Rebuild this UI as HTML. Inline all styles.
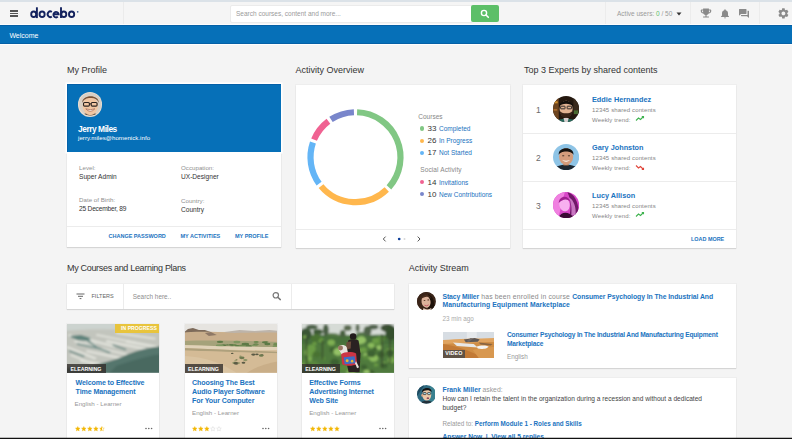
<!DOCTYPE html>
<html><head><meta charset="utf-8">
<style>
*{margin:0;padding:0;box-sizing:border-box}
html,body{width:792px;height:439px;overflow:hidden;background:#f4f4f4;font-family:"Liberation Sans",sans-serif;position:relative}
.a{position:absolute}
.t{position:absolute;white-space:nowrap;line-height:1}
.card{position:absolute;background:#fff;box-shadow:0 1px 1px rgba(0,0,0,.10),0 0 0 1px rgba(0,0,0,.025)}
.hl{position:absolute;height:1px;background:#ececec}
.ttl{position:absolute;white-space:nowrap;line-height:1;font-size:9px;color:#333}
.lnk{color:#1a73c0}
.grey{color:#858585}
</style></head><body>
<!-- top border -->
<div class="a" style="left:0;top:0;width:792px;height:2px;background:#dbe2e8"></div>
<!-- header -->
<div class="a" style="left:0;top:2px;width:792px;height:22px;background:#f5f5f5"></div>
<div class="a" style="left:0;top:23.5px;width:792px;height:1.7px;background:#fdfdfd"></div>
<!-- hamburger -->
<div class="a" style="left:9.5px;top:10.3px;width:8.8px;height:1.5px;background:#555"></div>
<div class="a" style="left:9.5px;top:12.9px;width:8.8px;height:1.5px;background:#555"></div>
<div class="a" style="left:9.5px;top:15.4px;width:8.8px;height:1.5px;background:#555"></div>
<!-- logo -->
<svg class="a" style="left:0;top:0" width="90" height="25" viewBox="0 0 90 25"><g fill="none" stroke="#13225e" stroke-width="1.9">
<ellipse cx="33.7" cy="14.25" rx="2.5" ry="2.8"/><path d="M36.9 7.3 V18.1"/>
<ellipse cx="42.1" cy="14.25" rx="2.55" ry="2.8"/>
<path d="M51.8 12 A2.6 2.8 0 1 0 51.8 16.5"/>
<path d="M53.4 14.2 H58.6 A2.6 2.8 0 1 0 57.8 16.7"/>
<path d="M61 7.3 V18.1"/><ellipse cx="63.8" cy="14.25" rx="2.5" ry="2.8"/>
<ellipse cx="71.6" cy="14.25" rx="2.6" ry="2.8"/>
</g><circle cx="77.7" cy="11.8" r="0.85" fill="#3a5a8e"/></svg>
<!-- header dividers -->
<div class="a" style="left:123px;top:2px;width:1px;height:22px;background:#ebebeb"></div>
<div class="a" style="left:605px;top:2px;width:1px;height:22px;background:#ececec"></div>
<div class="a" style="left:690px;top:2px;width:1px;height:22px;background:#ececec"></div>
<div class="a" style="left:759px;top:2px;width:1px;height:22px;background:#ececec"></div>
<!-- search -->
<div class="a" style="left:229.5px;top:5px;width:243px;height:17.5px;background:#fff;border:1px solid #ebebeb;border-radius:2px"></div>
<div class="t" style="left:236px;top:11.3px;font-size:6.5px;color:#9a9a9a">Search courses, content and more...</div>
<div class="a" style="left:471px;top:5px;width:28px;height:16.7px;background:#5cbf68;border-radius:2px"></div>
<svg class="a" style="left:479px;top:8px" width="12" height="12" viewBox="0 0 12 12"><circle cx="5" cy="5" r="2.6" fill="none" stroke="#fff" stroke-width="1.4"/><path d="M7 7 L9.3 9.3" stroke="#fff" stroke-width="1.6" stroke-linecap="round"/></svg>
<!-- active users -->
<div class="t" style="left:617px;top:10.5px;font-size:6.5px;color:#9a9a9a">Active users: <span style="color:#5cbf68">0</span> / 50</div>
<svg class="a" style="left:676px;top:11.5px" width="6" height="4" viewBox="0 0 6 4"><path d="M0.5 0.5 L5.5 0.5 L3 3.5Z" fill="#333"/></svg>
<!-- trophy -->
<svg class="a" style="left:698.5px;top:7.3px" width="14" height="12" viewBox="0 0 24 24" preserveAspectRatio="none"><path fill="#8a8a8a" d="M19 5h-2V3H7v2H5c-1.1 0-2 .9-2 2v1c0 2.550 1.92 4.63 4.39 4.94.63 1.5 1.98 2.63 3.610 2.96V19H7v2h10v-2h-4v-3.1c1.63-.33 2.98-1.46 3.61-2.96C19.08 12.63 21 10.55 21 8V7c0-1.1-.9-2-2-2zM5 8V7h2v3.82C5.84 10.4 5 9.3 5 8zm14 0c0 1.3-.84 2.4-2 2.82V7h2v1z"/></svg>
<!-- bell -->
<svg class="a" style="left:718.8px;top:7.6px" width="12" height="11.4" viewBox="0 0 24 24" preserveAspectRatio="none"><path fill="#8a8a8a" d="M12 22c1.1 0 2-.9 2-2h-4c0 1.1.89 2 2 2zm6-6v-5c0-3.070-1.64-5.64-4.5-6.32V4c0-.83-.67-1.5-1.5-1.5s-1.5.67-1.5 1.5v.68C7.63 5.36 6 7.92 6 11v5l-2 2v1h16v-1l-2-2z"/></svg>
<!-- chat -->
<svg class="a" style="left:737.6px;top:7.9px" width="12" height="11" viewBox="0 0 24 24" preserveAspectRatio="none"><path fill="#8a8a8a" d="M21 6h-2v9H6v2c0 .55.45 1 1 1h11l4 4V7c0-.55-.45-1-1-1zm-4 6V3c0-.55-.45-1-1-1H3c-.55 0-1 .45-1 1v14l4-4h10c.55 0 1-.45 1-1z"/></svg>
<!-- gear -->
<svg class="a" style="left:776.6px;top:7px" width="12.8" height="12.8" viewBox="0 0 24 24"><path fill="#8a8a8a" d="M19.14 12.94c.04-.3.06-.61.06-.94 0-.32-.02-.64-.07-.94l2.03-1.58c.18-.14.23-.41.12-.61l-1.920-3.32c-.12-.22-.37-.29-.59-.22l-2.39.96c-.5-.38-1.03-.7-1.62-.94l-.36-2.54c-.04-.24-.24-.41-.48-.41h-3.84c-.24 0-.43.17-.47.41l-.36 2.54c-.59.24-1.13.57-1.62.94l-2.39-.96c-.22-.08-.47 0-.59.22L2.74 8.87c-.12.21-.08.47.12.61l2.03 1.58c-.05.3-.09.63-.09.94s.02.64.07.94l-2.03 1.58c-.18.14-.23.41-.12.61l1.92 3.32c.12.22.37.29.59.22l2.39-.96c.5.38 1.03.7 1.62.94l.36 2.54c.05.24.24.41.48.41h3.84c.24 0 .44-.17.47-.41l.36-2.54c.59-.24 1.13-.56 1.62-.94l2.39.96c.22.08.47 0 .59-.22l1.920-3.32c.12-.22.07-.47-.12-.61l-2.01-1.58zM12 15.6c-1.98 0-3.6-1.62-3.6-3.6s1.62-3.6 3.6-3.6 3.6 1.62 3.6 3.6-1.62 3.6-3.6 3.6z"/></svg>

<!-- blue bar -->
<div class="a" style="left:0;top:25.2px;width:792px;height:18.9px;background:#0670b8;border-top:1px solid #0560a6;border-bottom:1px solid #0560a6"></div>
<div class="t" style="left:9.4px;top:31.9px;font-size:7px;color:#fff">Welcome</div>
<div class="a" style="left:0;top:44.1px;width:792px;height:1.4px;background:#fdfdfd"></div>

<!-- ===== My Profile ===== -->
<div class="ttl" style="left:67px;top:65.9px">My Profile</div>
<div class="card" style="left:67px;top:84px;width:214px;height:163px"></div>
<div class="a" style="left:67px;top:84px;width:214px;height:67.5px;background:#0670b8;box-shadow:0 0 0 1.5px #fff,inset 0 1px 0 #0560a8,inset 1px 0 0 #0562aa"></div>
<div class="a" style="left:77.6px;top:91.9px;width:24.8px;height:24.8px;border-radius:50%;background:#e9ddd0"></div><svg class="a" style="left:78.70px;top:93.00px" width="22.60" height="22.60" viewBox="0 0 100 100"><defs><clipPath id="cj"><circle cx="50" cy="50" r="50"/></clipPath></defs><g clip-path="url(#cj)"><rect width="100" height="100" fill="#d9cfc4"/>
<ellipse cx="50" cy="110" rx="45" ry="22" fill="#5a4a3a"/>
<ellipse cx="50" cy="58" rx="34" ry="40" fill="#f1c6a2"/>
<path d="M14 44 C12 6 88 2 88 44 C82 26 66 20 50 22 C34 22 20 28 14 44Z" fill="#7a5236"/>
<rect x="20" y="42" width="26" height="16" rx="5" fill="none" stroke="#2a2220" stroke-width="5"/>
<rect x="54" y="42" width="26" height="16" rx="5" fill="none" stroke="#2a2220" stroke-width="5"/>
<path d="M46 48 H54" stroke="#2a2220" stroke-width="4"/>
<path d="M30 70 Q50 92 70 70 Q50 78 30 70Z" fill="#fff" stroke="#a0604a" stroke-width="3"/></g></svg>
<div class="t" style="left:78px;top:124.7px;font-size:8.4px;font-weight:bold;color:#fff;letter-spacing:-.45px">Jerry Miles</div>
<div class="t" style="left:78px;top:135px;font-size:6.1px;color:#fff;letter-spacing:.04px">jerry.miles@homenick.info</div>
<div class="t grey" style="left:79px;top:164.9px;font-size:6.2px;color:#909090">Level:</div>
<div class="t" style="left:79px;top:173.7px;font-size:6.6px;color:#333">Super Admin</div>
<div class="t grey" style="left:181px;top:164.9px;font-size:6.2px;color:#909090">Occupation:</div>
<div class="t" style="left:181px;top:173.7px;font-size:6.6px;color:#333">UX-Designer</div>
<div class="t grey" style="left:79px;top:196.9px;font-size:6.2px;color:#909090">Date of Birth:</div>
<div class="t" style="left:79px;top:205.7px;font-size:6.6px;color:#333;letter-spacing:-.2px">25 December, 89</div>
<div class="t grey" style="left:181px;top:197.9px;font-size:6.2px;color:#909090">Country:</div>
<div class="t" style="left:181px;top:206.7px;font-size:6.6px;color:#333">Country</div>
<div class="hl" style="left:67px;top:226px;width:214px"></div>
<div class="t lnk" style="left:108.5px;top:233.7px;font-size:5.5px;font-weight:bold">CHANGE PASSWORD</div>
<div class="t lnk" style="left:180.5px;top:233.7px;font-size:5.5px;font-weight:bold">MY ACTIVITIES</div>
<div class="t lnk" style="left:235px;top:233.7px;font-size:5.5px;font-weight:bold">MY PROFILE</div>

<!-- ===== Activity Overview ===== -->
<div class="ttl" style="left:295.5px;top:65.9px">Activity Overview</div>
<div class="card" style="left:295.5px;top:84.5px;width:214px;height:163.5px"></div>
<svg class="a" style="left:295.5px;top:84.5px" width="214" height="144" viewBox="295.5 84.5 214 144">
<g fill="none" stroke-width="6.2">
<path d="M356.57 111.73 A45 45 0 0 1 388.44 186.81" stroke="#81c784"/>
<path d="M386.26 189.07 A45 45 0 0 1 320.53 185.63" stroke="#ffb74d"/>
<path d="M318.59 183.15 A45 45 0 0 1 312.45 142.05" stroke="#64b5f6"/>
<path d="M313.58 139.12 A45 45 0 0 1 327.92 120.76" stroke="#f06292"/>
<path d="M330.49 118.96 A45 45 0 0 1 353.43 111.73" stroke="#7986cb"/>
</g>
</svg>
<div class="hl" style="left:295.5px;top:228.5px;width:214px"></div>
<svg class="a" style="left:380px;top:234px" width="46" height="10" viewBox="0 0 46 10"><path d="M5.6 2.6 L3.3 5 L5.6 7.4" fill="none" stroke="#555" stroke-width="1"/><circle cx="19.2" cy="5" r="1.35" fill="#0d3f9a"/><circle cx="24.5" cy="5" r="1" fill="#d8d8d8"/><path d="M37.7 2.6 L40 5 L37.7 7.4" fill="none" stroke="#555" stroke-width="1"/></svg>
<div class="t grey" style="left:418.3px;top:113.8px;font-size:6.5px;color:#888">Courses</div>
<div class="t grey" style="left:420.2px;top:167.2px;font-size:6.5px;letter-spacing:.12px;color:#888">Social Activity</div>
<div class="a" style="left:420px;top:126.4px;width:4.2px;height:4.2px;border-radius:50%;background:#81c784"></div>
<div class="t" style="left:427.5px;top:124.9px;font-size:8px;color:#333">33</div>
<div class="t lnk" style="left:439px;top:125.8px;font-size:6.5px">Completed</div>
<div class="a" style="left:420px;top:138.7px;width:4.2px;height:4.2px;border-radius:50%;background:#ffb74d"></div>
<div class="t" style="left:427.5px;top:137.2px;font-size:8px;color:#333">26</div>
<div class="t lnk" style="left:439px;top:138.1px;font-size:6.5px">In Progress</div>
<div class="a" style="left:420px;top:150.7px;width:4.2px;height:4.2px;border-radius:50%;background:#64b5f6"></div>
<div class="t" style="left:427.5px;top:149.2px;font-size:8px;color:#333">17</div>
<div class="t lnk" style="left:439px;top:150.1px;font-size:6.5px">Not Started</div>
<div class="a" style="left:420px;top:180.3px;width:4.2px;height:4.2px;border-radius:50%;background:#f06292"></div>
<div class="t" style="left:427.5px;top:178.8px;font-size:8px;color:#333">14</div>
<div class="t lnk" style="left:439px;top:179.7px;font-size:6.5px">Invitations</div>
<div class="a" style="left:420px;top:192.2px;width:4.2px;height:4.2px;border-radius:50%;background:#7986cb"></div>
<div class="t" style="left:427.5px;top:190.7px;font-size:8px;color:#333">10</div>
<div class="t lnk" style="left:439px;top:191.6px;font-size:6.5px">New Contributions</div>

<!-- ===== Top 3 Experts ===== -->
<div class="ttl" style="left:524px;top:65.9px">Top 3 Experts by shared contents</div>
<div class="card" style="left:523.2px;top:84.5px;width:213px;height:163.5px"></div>
<div class="hl" style="left:523.2px;top:133px;width:213px"></div>
<div class="hl" style="left:523.2px;top:181px;width:213px"></div>
<div class="hl" style="left:523.2px;top:228.5px;width:213px"></div>
<div class="t lnk" style="left:691px;top:236.6px;font-size:5.45px;font-weight:bold">LOAD MORE</div>
<div class="t" style="left:536px;top:105.9px;font-size:8.5px;color:#6a6a6a">1</div>
<svg class="a" style="left:553.30px;top:95.90px" width="26.20" height="26.20" viewBox="0 0 100 100"><defs><clipPath id="ce"><circle cx="50" cy="50" r="50"/></clipPath></defs><g clip-path="url(#ce)"><rect width="100" height="100" fill="#24180f"/>
<rect x="0" y="0" width="22" height="100" fill="#6e4520"/><rect x="0" y="20" width="18" height="8" fill="#d0902e"/><rect x="2" y="50" width="14" height="6" fill="#b07030"/>
<rect x="78" y="0" width="22" height="70" fill="#3a2a1c"/><rect x="80" y="55" width="16" height="14" fill="#4a6a30"/>
<ellipse cx="50" cy="50" rx="25" ry="32" fill="#e2b392"/>
<path d="M24 40 C22 12 78 12 76 40 C68 26 32 26 24 40Z" fill="#15100c"/>
<path d="M25 55 C28 92 72 92 75 55 C68 70 32 70 25 55Z" fill="#3a2418"/>
<rect x="29" y="39" width="17" height="10" rx="2" fill="none" stroke="#222" stroke-width="3.5"/><rect x="54" y="39" width="17" height="10" rx="2" fill="none" stroke="#222" stroke-width="3.5"/>
<path d="M8 100 C20 82 80 82 92 100Z" fill="#2a6a5e"/><path d="M40 84 L60 84 L56 100 H44Z" fill="#d8d0d0"/></g></svg>
<div class="t lnk" style="left:592px;top:95.6px;font-size:7.3px;font-weight:bold">Eddie Hernandez</div>
<div class="t grey" style="left:592px;top:106.7px;font-size:6px;letter-spacing:.13px">12345 shared contents</div>
<div class="t grey" style="left:592px;top:116.7px;font-size:6px;letter-spacing:.15px">Weekly trend:</div>
<svg class="a" style="left:634.8px;top:115.3px" width="10" height="7" viewBox="0 0 10 7"><path d="M1 5.5 L3.5 3 L5.5 4.5 L8.5 1.5 M6.8 1.5 H8.5 V3.2" fill="none" stroke="#3fb34f" stroke-width="1.1"/></svg>
<div class="t" style="left:536px;top:154.3px;font-size:8.5px;color:#6a6a6a">2</div>
<svg class="a" style="left:553.30px;top:144.30px" width="26.20" height="26.20" viewBox="0 0 100 100"><defs><clipPath id="cg"><circle cx="50" cy="50" r="50"/></clipPath></defs><g clip-path="url(#cg)"><rect width="100" height="100" fill="#8ec4e6"/>
<path d="M2 100 C10 72 90 72 98 100Z" fill="#1c2630"/>
<rect x="40" y="70" width="20" height="12" fill="#b07858"/>
<ellipse cx="50" cy="48" rx="27" ry="32" fill="#d49c7c"/>
<path d="M22 42 C18 8 82 8 78 42 C74 24 26 24 22 42Z" fill="#15110e"/>
<path d="M34 60 Q50 76 66 60 Q50 68 34 60Z" fill="#fff"/>
<ellipse cx="39" cy="45" rx="4.5" ry="2.2" fill="#3a2a20"/><ellipse cx="61" cy="45" rx="4.5" ry="2.2" fill="#3a2a20"/></g></svg>
<div class="t lnk" style="left:592px;top:144.0px;font-size:7.3px;font-weight:bold">Gary Johnston</div>
<div class="t grey" style="left:592px;top:155.1px;font-size:6px;letter-spacing:.13px">12345 shared contents</div>
<div class="t grey" style="left:592px;top:165.1px;font-size:6px;letter-spacing:.15px">Weekly trend:</div>
<svg class="a" style="left:634.8px;top:163.7px" width="10" height="7" viewBox="0 0 10 7"><path d="M1 1.5 L3.5 4 L5.5 2.5 L8.5 5.5 M6.8 5.5 H8.5 V3.8" fill="none" stroke="#e0453a" stroke-width="1.1"/></svg>
<div class="t" style="left:536px;top:201.6px;font-size:8.5px;color:#6a6a6a">3</div>
<svg class="a" style="left:553.30px;top:191.60px" width="26.20" height="26.20" viewBox="0 0 100 100"><defs><clipPath id="cl"><circle cx="50" cy="50" r="50"/></clipPath></defs><g clip-path="url(#cl)"><rect width="100" height="100" fill="#d848c8"/>
<path d="M0 0 H45 L20 100 H0Z" fill="#f080e0"/>
<path d="M55 0 C85 10 100 40 100 100 H60 C70 70 70 30 55 0Z" fill="#701868"/>
<path d="M60 20 C80 30 90 60 86 90 L70 90 C72 60 70 40 60 20Z" fill="#f0a0e8" opacity=".7"/>
<ellipse cx="44" cy="48" rx="20" ry="26" fill="#f8b0f0" transform="rotate(-10 44 48)"/>
<path d="M22 42 C22 14 58 8 66 36 C54 24 36 26 22 42Z" fill="#a02090"/>
<path d="M20 100 C30 75 60 70 80 100Z" fill="#3a0a34"/></g></svg>
<div class="t lnk" style="left:592px;top:191.7px;font-size:7.3px;font-weight:bold">Lucy Allison</div>
<div class="t grey" style="left:592px;top:202.8px;font-size:6px;letter-spacing:.13px">12345 shared contents</div>
<div class="t grey" style="left:592px;top:212.8px;font-size:6px;letter-spacing:.15px">Weekly trend:</div>
<svg class="a" style="left:634.8px;top:211.4px" width="10" height="7" viewBox="0 0 10 7"><path d="M1 5.5 L3.5 3 L5.5 4.5 L8.5 1.5 M6.8 1.5 H8.5 V3.2" fill="none" stroke="#3fb34f" stroke-width="1.1"/></svg>


<!-- ===== My Courses ===== -->
<div class="ttl" style="left:67px;top:264.4px;letter-spacing:-.32px">My Courses and Learning Plans</div>
<div class="card" style="left:67px;top:283.8px;width:327px;height:25px"></div>
<div class="a" style="left:122.5px;top:283.8px;width:1px;height:25px;background:#ececec"></div>
<div class="a" style="left:290.5px;top:283.8px;width:1px;height:25px;background:#ececec"></div>
<svg class="a" style="left:76px;top:293px" width="9" height="7" viewBox="0 0 9 7"><path d="M0.5 1 H8.5 M2 3.3 H7 M3.6 5.6 H5.4" stroke="#666" stroke-width="1"/></svg>
<div class="t" style="left:91.5px;top:293.5px;font-size:5.5px;color:#666">FILTERS</div>
<div class="t" style="left:132.8px;top:294.4px;font-size:6.4px;color:#8e8e8e">Search here..</div>
<svg class="a" style="left:271px;top:291px" width="11" height="11" viewBox="0 0 11 11"><circle cx="4.8" cy="4.3" r="2.7" fill="none" stroke="#777" stroke-width="1.2"/><path d="M6.8 6.3 L9.3 8.6" stroke="#777" stroke-width="1.5" stroke-linecap="round"/></svg>

<div class="card" style="left:67px;top:324px;width:92.3px;height:120px"></div>
<svg class="a" style="left:67px;top:323.8px" width="92.3" height="48.8" viewBox="0 0 93 49" preserveAspectRatio="none"><defs><filter id="bl1" x="-10%" y="-10%" width="120%" height="120%"><feGaussianBlur stdDeviation="0.9"/></filter><clipPath id="cl1"><rect width="93" height="49"/></clipPath></defs><g clip-path="url(#cl1)"><rect width="93" height="49" fill="#aeb8b2"/><g filter="url(#bl1)"><rect x="-3" y="-3" width="99" height="55" fill="#aeb8b2"/><rect x="-3" y="-3" width="99" height="10" fill="#ccd3cf"/><path d="M-3 7 C25 4 60 5 96 8 V27 C82 28 72 27 62 31 C50 37 35 41 16 43 L-3 45Z" fill="#c2c5bd"/><path d="M2 10 L30 20 L28 21.43796462709189 L1 11.725557552510269Z" fill="#e2e3dc"/><path d="M8 16 L40 26 L38 27.744229225295953 L7 18.09307507035514Z" fill="#e2e3dc"/><path d="M0 22 L30 34 L28 35.56995516654808 L-1 23.883946199857697Z" fill="#e2e3dc"/><path d="M12 12 L50 22 L48 23.803920038596196 L11 14.164704046315434Z" fill="#e2e3dc"/><path d="M20 26 L58 34 L56 35.82572030410805 L19 28.190864364929666Z" fill="#e2e3dc"/><path d="M4 30 L28 40 L26 41.265528859239815 L3 31.518634631087775Z" fill="#e2e3dc"/><path d="M30 10 L70 18 L68 19.213167991554876 L29 11.45580158986585Z" fill="#e2e3dc"/><path d="M40 16 L80 24 L78 26.03746908209646 L39 18.44496289851575Z" fill="#e2e3dc"/><path d="M50 8 L90 14 L88 15.459354014328008 L49 9.75122481719361Z" fill="#e2e3dc"/><path d="M36 24 L62 30 L60 31.434330961046697 L35 25.721197153256036Z" fill="#e2e3dc"/><path d="M60 16 L92 22 L90 24.195644835510464 L59 18.634773802612557Z" fill="#e2e3dc"/><path d="M14 36 L40 40 L38 41.67026350752245 L13 38.00431620902694Z" fill="#e2e3dc"/><path d="M4 12 L24 16 L23 17.5 L4 13.8Z" fill="#6d8c86"/><path d="M10 19 L34 24 L33 25.5 L10 20.8Z" fill="#6d8c86"/><path d="M18 14 L30 22 L29 23.5 L18 15.8Z" fill="#6d8c86"/><path d="M2 26 L18 32 L17 33.5 L2 27.8Z" fill="#6d8c86"/><path d="M28 22 L44 28 L43 29.5 L28 23.8Z" fill="#6d8c86"/><path d="M46 20 L60 25 L59 26.5 L46 21.8Z" fill="#6d8c86"/><path d="M3 12 L14 11 L24 14 L20 17 L10 16Z" fill="#5f837c"/><path d="M10 46 C30 41 48 37 60 31 C72 26 84 23 96 22 V52 H-3 V47Z" fill="#55766d"/><path d="M50 42 C68 36 82 32 96 30 V52 H40Z" fill="#486960"/><path d="M-3 44 L14 44 L20 52 H-3Z" fill="#5a7068"/></g></g></svg>
<div class="a" style="left:115px;top:324px;width:44.3px;height:8.5px;background:#e8c43c"></div>
<div class="t" style="left:121px;top:326.1px;font-size:5.1px;font-weight:bold;color:#fff;letter-spacing:.05px">IN PROGRESS</div>
<div class="a" style="left:67px;top:364.4px;width:38.8px;height:8.2px;background:rgba(50,46,44,.8)"></div>
<div class="t" style="left:70.5px;top:366.5px;font-size:5.3px;font-weight:bold;color:#fff;letter-spacing:-.05px">ELEARNING</div>
<div class="a lnk" style="left:75.6px;top:378.8px;font-size:7.1px;letter-spacing:-.12px;font-weight:bold;line-height:9.1px;white-space:nowrap">Welcome to Effective<br>Time Management</div>
<div class="t" style="left:74.5px;top:401.2px;font-size:6.2px;color:#999">English - Learner</div>
<svg class="a" style="left:74.8px;top:425.8px" width="34" height="7" viewBox="0 0 34 7"><defs><linearGradient id="half"><stop offset="50%" stop-color="#f2b705"/><stop offset="50%" stop-color="#fff"/></linearGradient></defs><path transform="translate(0.30 0.3) scale(.82)" d="M3 0.3 L3.8 2.1 L5.8 2.3 L4.3 3.6 L4.7 5.6 L3 4.6 L1.3 5.6 L1.7 3.6 L0.2 2.3 L2.2 2.1Z" fill="#f2b705" stroke="#f2b705" stroke-width="0.5"/><path transform="translate(6.35 0.3) scale(.82)" d="M3 0.3 L3.8 2.1 L5.8 2.3 L4.3 3.6 L4.7 5.6 L3 4.6 L1.3 5.6 L1.7 3.6 L0.2 2.3 L2.2 2.1Z" fill="#f2b705" stroke="#f2b705" stroke-width="0.5"/><path transform="translate(12.40 0.3) scale(.82)" d="M3 0.3 L3.8 2.1 L5.8 2.3 L4.3 3.6 L4.7 5.6 L3 4.6 L1.3 5.6 L1.7 3.6 L0.2 2.3 L2.2 2.1Z" fill="#f2b705" stroke="#f2b705" stroke-width="0.5"/><path transform="translate(18.45 0.3) scale(.82)" d="M3 0.3 L3.8 2.1 L5.8 2.3 L4.3 3.6 L4.7 5.6 L3 4.6 L1.3 5.6 L1.7 3.6 L0.2 2.3 L2.2 2.1Z" fill="#f2b705" stroke="#f2b705" stroke-width="0.5"/><path transform="translate(24.50 0.3) scale(.82)" d="M3 0.3 L3.8 2.1 L5.8 2.3 L4.3 3.6 L4.7 5.6 L3 4.6 L1.3 5.6 L1.7 3.6 L0.2 2.3 L2.2 2.1Z" fill="url(#half)" stroke="#f2b705" stroke-width="0.5"/></svg>
<svg class="a" style="left:144.7px;top:427.3px" width="8" height="3" viewBox="0 0 8 3"><circle cx="1" cy="1.5" r="0.8" fill="#666"/><circle cx="3.8" cy="1.5" r="0.8" fill="#666"/><circle cx="6.6" cy="1.5" r="0.8" fill="#666"/></svg>
<div class="card" style="left:184.5px;top:324px;width:92.3px;height:120px"></div>
<svg class="a" style="left:184.5px;top:323.8px" width="92.3" height="48.8" viewBox="0 0 93 49" preserveAspectRatio="none"><defs><filter id="bl2" x="-10%" y="-10%" width="120%" height="120%"><feGaussianBlur stdDeviation="0.7"/></filter><clipPath id="cbl2"><rect width="93" height="49"/></clipPath></defs><g clip-path="url(#cbl2)"><rect width="93" height="49" fill="#d3bb97"/><g filter="url(#bl2)"><rect x="-3" y="-3" width="99" height="55" fill="#d3bb97"/><rect x="-3" y="-3" width="99" height="11" fill="#e6e4e0"/><path d="M40 8 L55 6 L70 7 L85 6 L96 7 V10 H40Z" fill="#bdb4aa"/><path d="M-3 10 L3 5 L8 4 L14 6 L20 6 L26 8 L30 10Z" fill="#7d6a5a"/><path d="M-3 9 C10 7 30 8 50 9 C70 9 85 8 96 9 V18 H-3Z" fill="#c9ae8c"/><path d="M20 9 L26 8 L32 11 L24 12Z" fill="#8e7866"/><path d="M-3 17 C30 16 60 17 96 18 V23 C60 24 30 22 -3 21Z" fill="#a5a27a"/><ellipse cx="60.8" cy="20.3" rx="3.8" ry="1.4" fill="#5d7a46"/><ellipse cx="60.8" cy="21.8" rx="2.1" ry="0.8" fill="#7e9660"/><ellipse cx="62.1" cy="20.6" rx="2.0" ry="0.8" fill="#5d7a46"/><ellipse cx="52.3" cy="18.0" rx="3.5" ry="1.3" fill="#7e9660"/><ellipse cx="71.2" cy="20.5" rx="2.6" ry="1.0" fill="#5d7a46"/><ellipse cx="72.3" cy="20.6" rx="2.0" ry="0.7" fill="#6f8a52"/><ellipse cx="82.4" cy="17.8" rx="1.7" ry="0.6" fill="#6f8a52"/><ellipse cx="69.2" cy="21.4" rx="2.4" ry="0.9" fill="#7e9660"/><ellipse cx="83.0" cy="20.1" rx="3.1" ry="1.2" fill="#5d7a46"/><ellipse cx="35.3" cy="17.9" rx="3.2" ry="1.2" fill="#5d7a46"/><ellipse cx="91.9" cy="22.5" rx="3.6" ry="1.4" fill="#7e9660"/><ellipse cx="49.5" cy="21.3" rx="2.8" ry="1.1" fill="#6f8a52"/><ellipse cx="39.0" cy="21.3" rx="2.6" ry="1.0" fill="#5d7a46"/><ellipse cx="57.0" cy="22.3" rx="3.6" ry="1.4" fill="#6f8a52"/><ellipse cx="47.2" cy="22.1" rx="1.7" ry="0.6" fill="#5d7a46"/><ellipse cx="90.9" cy="19.5" rx="1.8" ry="0.7" fill="#7e9660"/><ellipse cx="46.3" cy="20.9" rx="2.4" ry="0.9" fill="#5d7a46"/><ellipse cx="54.0" cy="22.3" rx="3.4" ry="1.3" fill="#6f8a52"/><ellipse cx="42.7" cy="21.0" rx="1.6" ry="0.6" fill="#5d7a46"/><ellipse cx="80.4" cy="18.4" rx="2.9" ry="1.1" fill="#5d7a46"/><ellipse cx="64.0" cy="22.4" rx="3.4" ry="1.3" fill="#5d7a46"/><ellipse cx="71.7" cy="18.1" rx="2.6" ry="1.0" fill="#6f8a52"/><ellipse cx="35.0" cy="21.8" rx="3.9" ry="1.5" fill="#7e9660"/><ellipse cx="52.3" cy="21.9" rx="2.1" ry="0.8" fill="#5d7a46"/><ellipse cx="91.8" cy="20.5" rx="3.0" ry="1.1" fill="#6f8a52"/><path d="M-3 21 C30 22 60 23 96 23 V26 C60 27 30 25 -3 24Z" fill="#e0d2b8"/><path d="M-3 24 C30 25 60 27 96 28 V30 C60 29 30 27 -3 26.5Z" fill="#aea07c"/><path d="M-3 26.5 L96 29.5 V52 H-3Z" fill="#d4bb96"/><path d="M-3 32 C20 33 40 40 56 52 H-3Z" fill="#dac4a2"/><path d="M58 52 C68 44 82 39 96 37 V52Z" fill="#c9ae88"/><ellipse cx="77.6" cy="31.3" rx="1.6" ry="0.8" fill="#5a5a44"/><ellipse cx="55.9" cy="32.3" rx="1.2" ry="0.6" fill="#8e9466"/><ellipse cx="51.9" cy="36.0" rx="1.1" ry="0.6" fill="#6e7a50"/><ellipse cx="57.3" cy="34.0" rx="2.7" ry="1.4" fill="#6e7a50"/><ellipse cx="72.5" cy="30.5" rx="1.8" ry="0.9" fill="#5a5a44"/><ellipse cx="50.1" cy="39.0" rx="2.5" ry="1.2" fill="#8e9466"/><ellipse cx="68.9" cy="30.7" rx="2.2" ry="1.1" fill="#5a5a44"/><ellipse cx="51.5" cy="39.5" rx="2.6" ry="1.3" fill="#5a5a44"/><ellipse cx="47.6" cy="29.5" rx="1.3" ry="0.7" fill="#5a5a44"/><ellipse cx="76.8" cy="31.6" rx="2.3" ry="1.2" fill="#6e7a50"/><ellipse cx="58.9" cy="39.0" rx="1.9" ry="1.0" fill="#5a5a44"/><ellipse cx="50.8" cy="36.9" rx="1.2" ry="0.6" fill="#8e9466"/><ellipse cx="60.8" cy="36.2" rx="2.2" ry="1.1" fill="#8e9466"/><ellipse cx="54.2" cy="39.1" rx="1.5" ry="0.7" fill="#8e9466"/></g></g></svg>
<div class="a" style="left:184.5px;top:364.4px;width:38.8px;height:8.2px;background:rgba(50,46,44,.8)"></div>
<div class="t" style="left:188.0px;top:366.5px;font-size:5.3px;font-weight:bold;color:#fff;letter-spacing:-.05px">ELEARNING</div>
<div class="a lnk" style="left:192.0px;top:378.8px;font-size:7.1px;letter-spacing:-.12px;font-weight:bold;line-height:9.1px;white-space:nowrap">Choosing The Best<br>Audio Player Software<br>For Your Computer</div>
<div class="t" style="left:192.0px;top:410.2px;font-size:6.2px;color:#999">English - Learner</div>
<svg class="a" style="left:192.3px;top:425.8px" width="34" height="7" viewBox="0 0 34 7"><defs><linearGradient id="half"><stop offset="50%" stop-color="#f2b705"/><stop offset="50%" stop-color="#fff"/></linearGradient></defs><path transform="translate(0.30 0.3) scale(.82)" d="M3 0.3 L3.8 2.1 L5.8 2.3 L4.3 3.6 L4.7 5.6 L3 4.6 L1.3 5.6 L1.7 3.6 L0.2 2.3 L2.2 2.1Z" fill="#f2b705" stroke="#f2b705" stroke-width="0.5"/><path transform="translate(6.35 0.3) scale(.82)" d="M3 0.3 L3.8 2.1 L5.8 2.3 L4.3 3.6 L4.7 5.6 L3 4.6 L1.3 5.6 L1.7 3.6 L0.2 2.3 L2.2 2.1Z" fill="#f2b705" stroke="#f2b705" stroke-width="0.5"/><path transform="translate(12.40 0.3) scale(.82)" d="M3 0.3 L3.8 2.1 L5.8 2.3 L4.3 3.6 L4.7 5.6 L3 4.6 L1.3 5.6 L1.7 3.6 L0.2 2.3 L2.2 2.1Z" fill="#f2b705" stroke="#f2b705" stroke-width="0.5"/><path transform="translate(18.45 0.3) scale(.82)" d="M3 0.3 L3.8 2.1 L5.8 2.3 L4.3 3.6 L4.7 5.6 L3 4.6 L1.3 5.6 L1.7 3.6 L0.2 2.3 L2.2 2.1Z" fill="none" stroke="#cfcfcf" stroke-width="0.5"/><path transform="translate(24.50 0.3) scale(.82)" d="M3 0.3 L3.8 2.1 L5.8 2.3 L4.3 3.6 L4.7 5.6 L3 4.6 L1.3 5.6 L1.7 3.6 L0.2 2.3 L2.2 2.1Z" fill="none" stroke="#cfcfcf" stroke-width="0.5"/></svg>
<svg class="a" style="left:262.2px;top:427.3px" width="8" height="3" viewBox="0 0 8 3"><circle cx="1" cy="1.5" r="0.8" fill="#666"/><circle cx="3.8" cy="1.5" r="0.8" fill="#666"/><circle cx="6.6" cy="1.5" r="0.8" fill="#666"/></svg>
<div class="card" style="left:301.7px;top:324px;width:92.3px;height:120px"></div>
<svg class="a" style="left:301.7px;top:323.8px" width="92.3" height="48.8" viewBox="0 0 93 49" preserveAspectRatio="none"><defs><filter id="bl3" x="-10%" y="-10%" width="120%" height="120%"><feGaussianBlur stdDeviation="1.1"/></filter><filter id="bl3b"><feGaussianBlur stdDeviation="0.35"/></filter><clipPath id="cbl3"><rect width="93" height="49"/></clipPath></defs><g clip-path="url(#cbl3)"><rect width="93" height="49" fill="#4f7a3c"/><g filter="url(#bl3)"><rect x="-3" y="-3" width="99" height="55" fill="#4f7a3c"/><rect x="-3" y="-3" width="99" height="14" fill="#d6dbd6"/><ellipse cx="10" cy="3" rx="6" ry="2.5" fill="#4a5e44"/><ellipse cx="16" cy="8" rx="5" ry="3" fill="#3e5a36"/><ellipse cx="46" cy="4" rx="4" ry="3" fill="#5a6a50"/><ellipse cx="41" cy="10" rx="3" ry="4" fill="#4a6040"/><ellipse cx="72" cy="3" rx="5" ry="2.5" fill="#4e5e48"/><ellipse cx="86" cy="4" rx="7" ry="4" fill="#3c5034"/><ellipse cx="30" cy="12" rx="8" ry="3" fill="#5a7a4a"/><ellipse cx="60" cy="11" rx="6" ry="3" fill="#56764a"/><path d="M-3 14 C10 10 25 11 40 13 C55 12 70 10 96 11 V20 H-3Z" fill="#46703a"/><ellipse cx="4" cy="10" rx="6" ry="6" fill="#3a5634"/><ellipse cx="24" cy="6" rx="3" ry="6" fill="#4a5e44"/><ellipse cx="66" cy="7" rx="4" ry="5" fill="#506448"/><ellipse cx="90" cy="9" rx="6" ry="7" fill="#34502e"/><ellipse cx="56" cy="4" rx="2" ry="4" fill="#5a6a52"/><ellipse cx="29.4" cy="18.6" rx="3.8" ry="3.0" fill="#7fb052"/><ellipse cx="77.7" cy="16.5" rx="3.5" ry="2.8" fill="#4a7232"/><ellipse cx="18.8" cy="16.2" rx="3.0" ry="2.4" fill="#6a9c44"/><ellipse cx="6.8" cy="28.7" rx="4.4" ry="3.5" fill="#7fb052"/><ellipse cx="89.9" cy="36.3" rx="3.5" ry="2.8" fill="#7fb052"/><ellipse cx="54.0" cy="27.7" rx="4.9" ry="3.9" fill="#7fb052"/><ellipse cx="52.0" cy="17.9" rx="3.0" ry="2.4" fill="#4a7232"/><ellipse cx="9.4" cy="24.4" rx="4.4" ry="3.5" fill="#6a9c44"/><ellipse cx="8.0" cy="34.1" rx="2.2" ry="1.7" fill="#7fb052"/><ellipse cx="51.1" cy="15.3" rx="1.7" ry="1.4" fill="#6a9c44"/><ellipse cx="46.2" cy="32.7" rx="4.2" ry="3.4" fill="#5a8a3c"/><ellipse cx="54.8" cy="29.8" rx="2.5" ry="2.0" fill="#3e6230"/><ellipse cx="15.4" cy="41.9" rx="1.8" ry="1.4" fill="#8abb5c"/><ellipse cx="82.9" cy="40.0" rx="2.5" ry="2.0" fill="#7fb052"/><ellipse cx="9.5" cy="28.5" rx="4.1" ry="3.3" fill="#6a9c44"/><ellipse cx="88.5" cy="28.6" rx="4.9" ry="3.9" fill="#7fb052"/><ellipse cx="72.2" cy="34.2" rx="4.6" ry="3.7" fill="#8abb5c"/><ellipse cx="31.0" cy="26.0" rx="3.2" ry="2.6" fill="#3e6230"/><ellipse cx="42.3" cy="44.1" rx="4.8" ry="3.8" fill="#5a8a3c"/><ellipse cx="4.3" cy="40.1" rx="2.6" ry="2.1" fill="#4a7232"/><ellipse cx="77.7" cy="23.5" rx="2.9" ry="2.3" fill="#94c266"/><ellipse cx="31.7" cy="47.8" rx="2.7" ry="2.2" fill="#3a5a2c"/><ellipse cx="3.7" cy="41.4" rx="2.0" ry="1.6" fill="#3a5a2c"/><ellipse cx="86.9" cy="31.4" rx="2.1" ry="1.7" fill="#5a8a3c"/><ellipse cx="51.3" cy="45.7" rx="4.4" ry="3.5" fill="#3e6230"/><ellipse cx="66.5" cy="49.5" rx="3.9" ry="3.1" fill="#5a8a3c"/><ellipse cx="12.6" cy="19.5" rx="2.3" ry="1.8" fill="#6a9c44"/><ellipse cx="-0.8" cy="43.8" rx="2.1" ry="1.7" fill="#3a5a2c"/><ellipse cx="38.6" cy="26.7" rx="3.5" ry="2.8" fill="#6a9c44"/><ellipse cx="65.0" cy="32.1" rx="3.7" ry="2.9" fill="#94c266"/><ellipse cx="69.8" cy="29.9" rx="4.5" ry="3.6" fill="#3e6230"/><ellipse cx="64.0" cy="33.7" rx="2.9" ry="2.3" fill="#5a8a3c"/><ellipse cx="8.0" cy="36.5" rx="1.7" ry="1.4" fill="#7fb052"/><ellipse cx="93.5" cy="29.3" rx="1.9" ry="1.5" fill="#4a7232"/><ellipse cx="3.1" cy="13.0" rx="2.0" ry="1.6" fill="#7fb052"/><ellipse cx="90.0" cy="35.7" rx="1.7" ry="1.4" fill="#6a9c44"/><ellipse cx="57.6" cy="18.5" rx="2.4" ry="1.9" fill="#8abb5c"/><ellipse cx="56.4" cy="30.5" rx="1.9" ry="1.5" fill="#5a8a3c"/><ellipse cx="94.3" cy="30.2" rx="3.2" ry="2.6" fill="#7fb052"/><ellipse cx="12.0" cy="40.7" rx="4.1" ry="3.3" fill="#5a8a3c"/><ellipse cx="13.7" cy="13.9" rx="4.8" ry="3.9" fill="#4a7232"/><ellipse cx="33.1" cy="38.5" rx="4.7" ry="3.8" fill="#3e6230"/><ellipse cx="49.2" cy="49.2" rx="4.5" ry="3.6" fill="#94c266"/><ellipse cx="48.3" cy="46.6" rx="2.7" ry="2.2" fill="#6a9c44"/><ellipse cx="73.6" cy="25.2" rx="2.3" ry="1.8" fill="#3e6230"/><ellipse cx="74.5" cy="41.1" rx="2.2" ry="1.7" fill="#6a9c44"/><ellipse cx="69.8" cy="21.4" rx="3.3" ry="2.6" fill="#8abb5c"/><ellipse cx="68.9" cy="49.6" rx="4.3" ry="3.4" fill="#3a5a2c"/><ellipse cx="65.2" cy="48.4" rx="3.1" ry="2.5" fill="#94c266"/><ellipse cx="90.6" cy="26.5" rx="2.3" ry="1.8" fill="#6a9c44"/><ellipse cx="43.6" cy="25.5" rx="3.2" ry="2.6" fill="#4a7232"/><ellipse cx="79.5" cy="30.7" rx="3.8" ry="3.0" fill="#3e6230"/><ellipse cx="60.4" cy="43.9" rx="1.9" ry="1.5" fill="#5a8a3c"/><ellipse cx="70.8" cy="30.7" rx="2.1" ry="1.7" fill="#3e6230"/><ellipse cx="59.7" cy="16.2" rx="4.8" ry="3.8" fill="#94c266"/><ellipse cx="36.4" cy="27.9" rx="4.8" ry="3.9" fill="#94c266"/><ellipse cx="13.4" cy="49.7" rx="1.6" ry="1.3" fill="#4a7232"/><ellipse cx="76.2" cy="18.4" rx="4.4" ry="3.5" fill="#5a8a3c"/><ellipse cx="61.8" cy="26.0" rx="3.4" ry="2.7" fill="#6a9c44"/><ellipse cx="0.1" cy="42.6" rx="4.0" ry="3.2" fill="#7fb052"/><ellipse cx="88.6" cy="29.1" rx="4.6" ry="3.6" fill="#3e6230"/><ellipse cx="82.8" cy="14.0" rx="2.2" ry="1.8" fill="#4a7232"/><ellipse cx="21.3" cy="34.7" rx="2.4" ry="1.9" fill="#5a8a3c"/><ellipse cx="78.9" cy="15.3" rx="4.1" ry="3.3" fill="#5a8a3c"/><ellipse cx="62.3" cy="43.2" rx="3.3" ry="2.6" fill="#3e6230"/><ellipse cx="46.7" cy="32.7" rx="3.3" ry="2.7" fill="#7fb052"/><ellipse cx="82.7" cy="41.7" rx="3.6" ry="2.9" fill="#3e6230"/><ellipse cx="14.7" cy="30.5" rx="4.0" ry="3.2" fill="#4a7232"/><ellipse cx="4.0" cy="38.2" rx="3.4" ry="2.7" fill="#5a8a3c"/><ellipse cx="74.1" cy="16.9" rx="3.5" ry="2.8" fill="#6a9c44"/><rect x="4" y="12" width="1.2" height="34" fill="#34402c"/><rect x="80" y="10" width="1.2" height="34" fill="#34402c"/><rect x="88" y="14" width="1.2" height="26" fill="#34402c"/><rect x="20" y="16" width="1.2" height="20" fill="#34402c"/></g><g filter="url(#bl3b)" transform="translate(2.5 -0.5)"><circle cx="49" cy="13" r="3.3" fill="#241c1a"/>
<path d="M44 17 C46 15.5 52 15.5 54.5 17 L56.5 30 L55.5 49 H44.5 L42 38Z" fill="#2c2422"/>
<path d="M42.5 18.5 L47 18 L46.5 25 L41.5 26Z" fill="#6c4c3a"/>
<path d="M34 25 C34 21 40 20.5 42.5 23.5 L44 30 L38 32Z" fill="#e8e4de"/>
<circle cx="36.3" cy="24.5" r="2.5" fill="#9a7462"/>
<path d="M37 31 C40 28 48 28 52 30 L53 41 C48 43 42 43 38 41Z" fill="#cc3444"/>
<path d="M39.5 34 L50.5 33 L51.5 40 L40.5 41Z" fill="#3d6fc8"/>
<circle cx="43" cy="37.5" r="1.5" fill="#e8b830"/><circle cx="48" cy="37.8" r="1.3" fill="#e8b830"/>
<path d="M52 38 L55 44 L53 45 L51 40Z" fill="#e6e2dc"/></g></g></svg>
<div class="a" style="left:301.7px;top:364.4px;width:38.8px;height:8.2px;background:rgba(50,46,44,.8)"></div>
<div class="t" style="left:305.2px;top:366.5px;font-size:5.3px;font-weight:bold;color:#fff;letter-spacing:-.05px">ELEARNING</div>
<div class="a lnk" style="left:309.2px;top:378.8px;font-size:7.1px;letter-spacing:-.12px;font-weight:bold;line-height:9.1px;white-space:nowrap">Effective Forms<br>Advertising Internet<br>Web Site</div>
<div class="t" style="left:309.2px;top:410.2px;font-size:6.2px;color:#999">English - Learner</div>
<svg class="a" style="left:309.5px;top:425.8px" width="34" height="7" viewBox="0 0 34 7"><defs><linearGradient id="half"><stop offset="50%" stop-color="#f2b705"/><stop offset="50%" stop-color="#fff"/></linearGradient></defs><path transform="translate(0.30 0.3) scale(.82)" d="M3 0.3 L3.8 2.1 L5.8 2.3 L4.3 3.6 L4.7 5.6 L3 4.6 L1.3 5.6 L1.7 3.6 L0.2 2.3 L2.2 2.1Z" fill="#f2b705" stroke="#f2b705" stroke-width="0.5"/><path transform="translate(6.35 0.3) scale(.82)" d="M3 0.3 L3.8 2.1 L5.8 2.3 L4.3 3.6 L4.7 5.6 L3 4.6 L1.3 5.6 L1.7 3.6 L0.2 2.3 L2.2 2.1Z" fill="#f2b705" stroke="#f2b705" stroke-width="0.5"/><path transform="translate(12.40 0.3) scale(.82)" d="M3 0.3 L3.8 2.1 L5.8 2.3 L4.3 3.6 L4.7 5.6 L3 4.6 L1.3 5.6 L1.7 3.6 L0.2 2.3 L2.2 2.1Z" fill="#f2b705" stroke="#f2b705" stroke-width="0.5"/><path transform="translate(18.45 0.3) scale(.82)" d="M3 0.3 L3.8 2.1 L5.8 2.3 L4.3 3.6 L4.7 5.6 L3 4.6 L1.3 5.6 L1.7 3.6 L0.2 2.3 L2.2 2.1Z" fill="#f2b705" stroke="#f2b705" stroke-width="0.5"/><path transform="translate(24.50 0.3) scale(.82)" d="M3 0.3 L3.8 2.1 L5.8 2.3 L4.3 3.6 L4.7 5.6 L3 4.6 L1.3 5.6 L1.7 3.6 L0.2 2.3 L2.2 2.1Z" fill="#f2b705" stroke="#f2b705" stroke-width="0.5"/></svg>
<svg class="a" style="left:379.4px;top:427.3px" width="8" height="3" viewBox="0 0 8 3"><circle cx="1" cy="1.5" r="0.8" fill="#666"/><circle cx="3.8" cy="1.5" r="0.8" fill="#666"/><circle cx="6.6" cy="1.5" r="0.8" fill="#666"/></svg>

<!-- ===== Activity Stream ===== -->
<div class="ttl" style="left:408.8px;top:264.4px">Activity Stream</div>
<div class="card" style="left:408.5px;top:283.8px;width:327.5px;height:84.3px"></div>
<div class="card" style="left:408.5px;top:377.6px;width:327.5px;height:70px"></div>

<svg class="a" style="left:417.10px;top:291.60px" width="18.80" height="18.80" viewBox="0 0 100 100"><defs><clipPath id="cs"><circle cx="50" cy="50" r="50"/></clipPath></defs><g clip-path="url(#cs)"><rect width="100" height="100" fill="#2e1c12"/>
<path d="M0 0 H100 V100 H0Z" fill="#3a2418"/>
<path d="M60 10 C85 20 95 50 90 100 H60Z" fill="#1e120a"/>
<ellipse cx="48" cy="52" rx="24" ry="32" fill="#dcb29a" transform="rotate(-12 48 52)"/>
<path d="M20 40 C25 10 70 8 75 35 C62 22 40 22 20 40Z" fill="#4a2e1e"/>
<ellipse cx="40" cy="45" rx="5" ry="3" fill="#5a3a2a"/><ellipse cx="60" cy="42" rx="5" ry="3" fill="#5a3a2a"/>
<path d="M40 70 Q52 78 62 68" fill="none" stroke="#c25866" stroke-width="5"/>
<path d="M35 85 C45 95 65 95 75 85 L80 100 H30Z" fill="#e6d0c0"/></g></svg>
<div class="t" style="left:442.5px;top:293.5px;font-size:6.8px;color:#8a8a8a"><b class="lnk" style="letter-spacing:-.1px">Stacy Miller</b><span style="letter-spacing:.2px"> has been enrolled in course </span><b class="lnk" style="letter-spacing:-.05px">Consumer Psychology In The Industrial And</b></div>
<div class="t lnk" style="left:442.5px;top:302.4px;font-size:6.8px;font-weight:bold;letter-spacing:.07px">Manufacturing Equipment Marketplace</div>
<div class="t" style="left:442.5px;top:315.8px;font-size:6.3px;color:#aaa">23 min ago</div>
<svg class="a" style="left:442.5px;top:332px" width="51.6" height="26" viewBox="0 0 52 26" preserveAspectRatio="none">
<rect width="52" height="26" fill="#cf8d45"/>
<rect width="52" height="8" fill="#d7dde3"/>
<rect x="24" y="0" width="10" height="7" fill="#e6e9ec"/>
<path d="M0 8 C15 7 35 6.5 52 6 V10 C35 10 15 11 0 12Z" fill="#e0a460"/>
<path d="M0 12 C15 14 30 20 40 26 H0Z" fill="#c27a36"/>
<path d="M30 18 C40 16 48 15 52 15 V26 H36Z" fill="#d89850"/>
<path d="M21 7.5 L32 6 L37 7.5 L35 9.8 L23 10.3Z" fill="#5e5856"/>
<path d="M24 9 L28 6 L30 7 L26 10Z" fill="#706a68"/>
<path d="M10 10.5 L31 12 L35 15.5 L14 14Z" fill="#e8e8e6"/>
<path d="M34 14.5 C37 13 44 13 46 14.5 C45 17 38 17.5 35 16.5Z" fill="#f4f4f2"/>
<path d="M36 10.5 L50 12 L48 13.5 L38 12.5Z" fill="#5a4a40" opacity=".6"/>
</svg>
<div class="a" style="left:442.5px;top:350.2px;width:22.2px;height:7.8px;background:rgba(75,75,75,.82)"></div>
<div class="t" style="left:445.2px;top:351.4px;font-size:5.4px;font-weight:bold;color:#fff;letter-spacing:.1px">VIDEO</div>
<div class="t lnk" style="left:507px;top:332px;font-size:6.6px;font-weight:bold;letter-spacing:-.17px">Consumer Psychology In The Industrial And Manufacturing Equipment</div>
<div class="t lnk" style="left:507px;top:340.8px;font-size:6.6px;font-weight:bold;letter-spacing:-.17px">Marketplace</div>
<div class="t" style="left:507px;top:353.8px;font-size:6.3px;color:#999">English</div>
<svg class="a" style="left:416.60px;top:385.00px" width="18.80" height="18.80" viewBox="0 0 100 100"><defs><clipPath id="cf"><circle cx="50" cy="50" r="50"/></clipPath></defs><g clip-path="url(#cf)"><rect width="100" height="100" fill="#2f6a80"/>
<path d="M0 0 L40 0 L0 60Z" fill="#1e4a60"/>
<path d="M70 0 H100 V100 L60 100Z" fill="#3d8a96" opacity=".7"/>
<path d="M15 100 C25 78 80 78 90 100Z" fill="#22303a"/>
<ellipse cx="52" cy="52" rx="24" ry="31" fill="#ecc8a8"/>
<path d="M26 40 C24 10 80 8 78 38 C68 24 38 24 26 40Z" fill="#151515"/>
<ellipse cx="28" cy="55" rx="5" ry="8" fill="#d8a888"/>
<rect x="33" y="40" width="16" height="11" rx="4" fill="#a8d8e8" stroke="#1a1a1a" stroke-width="3.5"/><rect x="56" y="40" width="16" height="11" rx="4" fill="#a8d8e8" stroke="#1a1a1a" stroke-width="3.5"/>
<ellipse cx="58" cy="70" rx="7" ry="5" fill="#8a4a5a"/></g></svg>
<div class="t" style="left:442.5px;top:387.4px;font-size:6.8px;color:#999"><b class="lnk">Frank Miller</b> asked:</div>
<div class="t" style="left:442.5px;top:396.4px;font-size:6.6px;color:#444">How can I retain the talent in the organization during a recession and without a dedicated</div>
<div class="t" style="left:442.5px;top:405.1px;font-size:6.6px;color:#444">budget?</div>
<div class="t" style="left:442.5px;top:420.8px;font-size:6.3px;color:#999">Related to: <b class="lnk">Perform Module 1 - Roles and Skills</b></div>
<div class="t lnk" style="left:442.5px;top:433.6px;font-size:6.6px;font-weight:bold">Answer Now&nbsp; | &nbsp;View all 5 replies</div>

<!-- bottom dark line -->
<div class="a" style="left:0;top:437px;width:792px;height:1px;background:rgba(17,17,17,.25)"></div>
<div class="a" style="left:0;top:438px;width:792px;height:1px;background:#111"></div>
</body></html>
